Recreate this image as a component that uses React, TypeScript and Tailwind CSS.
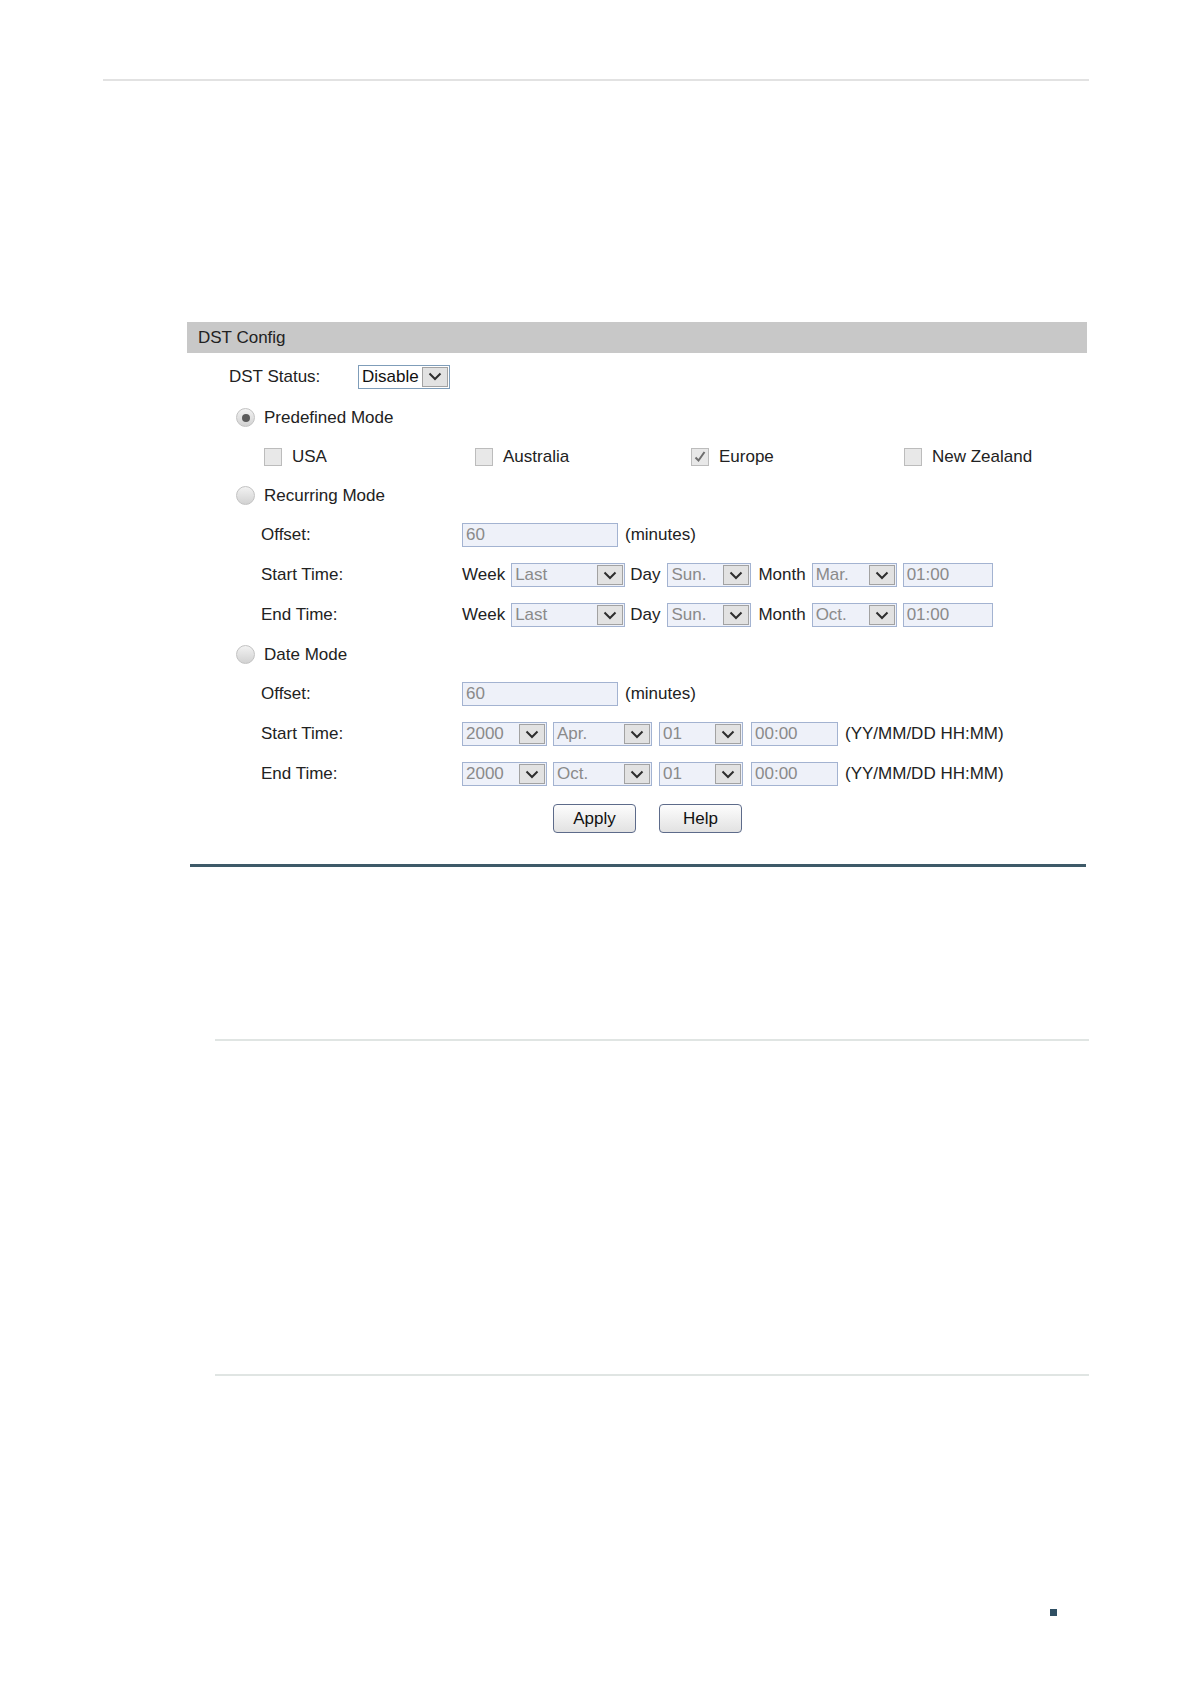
import React from 'react';

const Chevron = () => (
  <svg width="16" height="11" viewBox="0 0 16 11">
    <polyline points="2.5,2.5 8,8 13.5,2.5" fill="none" stroke="#2e2e2e" strokeWidth="2" />
  </svg>
);

const Select = ({ value, className, white = false }: { value: string; className: string; white?: boolean }) => (
  <div
    className={`flex h-[24px] items-stretch border ${
      white ? 'border-[#7f9db9] bg-white text-[#111]' : 'border-[#a3b3d1] bg-[#eef1f9] text-[#8a8a8a]'
    } ${className}`}
  >
    <span className="flex-1 overflow-hidden pl-[3px] leading-[22px] whitespace-nowrap">{value}</span>
    <span className="my-px mr-px flex w-[26px] items-center justify-center border border-[#a2a2a2] bg-[#e2e2e2]">
      <Chevron />
    </span>
  </div>
);

const TextBox = ({ value, className }: { value: string; className: string }) => (
  <div
    className={`h-[24px] border border-[#a3b3d1] bg-[#eef1f9] pl-[3px] leading-[22px] text-[#8a8a8a] ${className}`}
  >
    {value}
  </div>
);

const Radio = ({ checked = false, label }: { checked?: boolean; label: string }) => (
  <div className="flex h-[39px] items-center pl-[236px]">
    <span className="flex h-[19px] w-[19px] items-center justify-center rounded-full border border-[#c2c2c2] bg-linear-to-b from-[#f2f2f2] to-[#d2d2d2]">
      {checked && <span className="h-[8px] w-[8px] rounded-full bg-[#5a5a5a]" />}
    </span>
    <span className="ml-[9px]">{label}</span>
  </div>
);

const Check = ({ checked = false, label, className }: { checked?: boolean; label: string; className: string }) => (
  <div className={`flex items-center ${className}`}>
    <span className="flex h-[18px] w-[18px] items-center justify-center border border-[#bcbcbc] bg-[#e8e8e8]">
      {checked && (
        <svg width="14" height="14" viewBox="0 0 14 14">
          <path d="M2.5 7.5 L5.5 10.5 L11.5 2" fill="none" stroke="#6e6e6e" strokeWidth="2" />
        </svg>
      )}
    </span>
    <span className="ml-[10px]">{label}</span>
  </div>
);

const FieldRow = ({ label, children }: { label: string; children: React.ReactNode }) => (
  <div className="flex h-[40px] items-center pl-[261px]">
    <span className="w-[201px]">{label}</span>
    <div className="flex items-center">{children}</div>
  </div>
);

const PushButton = ({ label }: { label: string }) => (
  <button
    type="button"
    className="h-[29px] w-[83px] rounded-[4px] border border-[#5d6b8a] bg-linear-to-b from-[#fdfdfd] to-[#e2e2e2] text-[17px] text-[#111]"
  >
    {label}
  </button>
);

export default function App() {
  return (
    <div className="h-[1684px] w-[1191px] bg-white font-['Liberation_Sans',Arial,sans-serif] text-[17px] text-[#222]">
      <div className="pt-[79px]">
        <div className="ml-[103px] h-[2px] w-[986px] bg-[#e2e2e2]" />
      </div>

      <div className="mt-[241px] ml-[187px] flex h-[31px] w-[900px] items-center bg-[#c8c8c8] pl-[11px]">
        DST Config
      </div>

      <div className="pt-[4px]">
        <div className="flex h-[39px] items-center pl-[229px]">
          <span className="w-[129px]">DST Status:</span>
          <Select value="Disable" white className="w-[92px]" />
        </div>

        <div className="pt-[2px]">
          <Radio checked label="Predefined Mode" />
        </div>

        <div className="flex h-[39px] items-center pl-[264px]">
          <Check label="USA" className="w-[211px]" />
          <Check label="Australia" className="w-[216px]" />
          <Check checked label="Europe" className="w-[213px]" />
          <Check label="New Zealand" className="w-[180px]" />
        </div>

        <Radio label="Recurring Mode" />

        <FieldRow label="Offset:">
          <TextBox value="60" className="w-[156px]" />
          <span className="ml-[7px]">(minutes)</span>
        </FieldRow>
        <FieldRow label="Start Time:">
          <span>Week</span>
          <Select value="Last" className="ml-[6px] w-[114px]" />
          <span className="ml-[5px]">Day</span>
          <Select value="Sun." className="ml-[7px] w-[84px]" />
          <span className="ml-[7px]">Month</span>
          <Select value="Mar." className="ml-[6px] w-[85px]" />
          <TextBox value="01:00" className="ml-[6px] w-[90px]" />
        </FieldRow>
        <FieldRow label="End Time:">
          <span>Week</span>
          <Select value="Last" className="ml-[6px] w-[114px]" />
          <span className="ml-[5px]">Day</span>
          <Select value="Sun." className="ml-[7px] w-[84px]" />
          <span className="ml-[7px]">Month</span>
          <Select value="Oct." className="ml-[6px] w-[85px]" />
          <TextBox value="01:00" className="ml-[6px] w-[90px]" />
        </FieldRow>

        <Radio label="Date Mode" />

        <FieldRow label="Offset:">
          <TextBox value="60" className="w-[156px]" />
          <span className="ml-[7px]">(minutes)</span>
        </FieldRow>
        <FieldRow label="Start Time:">
          <Select value="2000" className="w-[85px]" />
          <Select value="Apr." className="ml-[6px] w-[99px]" />
          <Select value="01" className="ml-[7px] w-[84px]" />
          <TextBox value="00:00" className="ml-[8px] w-[87px]" />
          <span className="ml-[7px]">(YY/MM/DD HH:MM)</span>
        </FieldRow>
        <FieldRow label="End Time:">
          <Select value="2000" className="w-[85px]" />
          <Select value="Oct." className="ml-[6px] w-[99px]" />
          <Select value="01" className="ml-[7px] w-[84px]" />
          <TextBox value="00:00" className="ml-[8px] w-[87px]" />
          <span className="ml-[7px]">(YY/MM/DD HH:MM)</span>
        </FieldRow>

        <div className="flex gap-[23px] pt-[10px] pl-[553px]">
          <PushButton label="Apply" />
          <PushButton label="Help" />
        </div>
      </div>

      <div className="mt-[31px] ml-[190px] h-[3px] w-[896px] bg-[#3e5a68]" />

      <div className="mt-[172px] ml-[215px] h-[2px] w-[874px] bg-[#e0e5e3]" />
      <div className="mt-[333px] ml-[215px] h-[2px] w-[874px] bg-[#e0e5e3]" />

      <div className="mt-[233px] ml-[1050px] h-[7px] w-[7px] bg-[#2f4f63]" />
    </div>
  );
}
